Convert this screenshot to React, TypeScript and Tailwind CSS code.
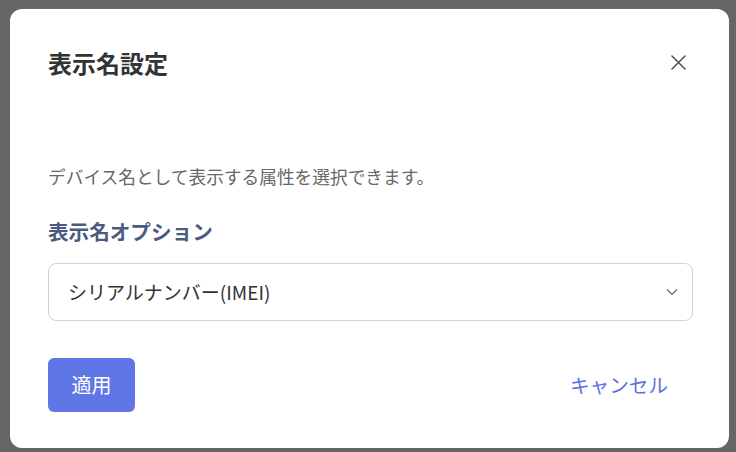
import React from "react";

export default function App() {
  const font = { fontFamily: '"Noto Sans CJK JP", "Noto Sans", sans-serif' };
  return (
    <div className="w-[736px] h-[452px] bg-[#666666] pt-[9px] pl-[10px] overflow-hidden" style={font}>
      <div className="w-[719px] h-[439px] rounded-[12px] bg-white px-[38px] flex flex-col">
        <div className="flex items-center justify-between mt-[38px] h-[32px]">
          <h2 className="text-[24px] leading-[32px] font-bold text-[#333333]">表示名設定</h2>
          <button className="w-[24px] h-[24px] flex items-center justify-center mr-[1px] -mt-[2px]">
            <svg width="15" height="15" viewBox="0 0 15 15">
              <path d="M1 1 L14 14 M14 1 L1 14" stroke="#555555" strokeWidth="1.6" strokeLinecap="round" />
            </svg>
          </button>
        </div>
        <p className="mt-[85px] text-[17.7px] leading-[24px] text-[#666666]">
          デバイス名として表示する属性を選択できます。
        </p>
        <label className="mt-[29px] text-[20.6px] leading-[28px] font-bold text-[#4b5a82]">表示名オプション</label>
        <div className="mt-[18px] h-[58px] w-[645px] rounded-[8px] border border-[#d4d4d4] flex items-center justify-between pl-[19px] pr-[14px]">
          <span className="text-[19px] text-[#333333]">シリアルナンバー(IMEI)</span>
          <svg width="12" height="8" viewBox="0 0 12 8">
            <path d="M1 1.5 L6 6.5 L11 1.5" fill="none" stroke="#5a6486" strokeWidth="1.2" />
          </svg>
        </div>
        <div className="mt-[37px] flex items-center justify-between">
          <button className="w-[87px] h-[54px] rounded-[6px] bg-[#5f76e6] text-white text-[20px]">適用</button>
          <button className="text-[19.6px] text-[#5b72e0] mr-[23px] -mt-[1px]">キャンセル</button>
        </div>
      </div>
    </div>
  );
}
